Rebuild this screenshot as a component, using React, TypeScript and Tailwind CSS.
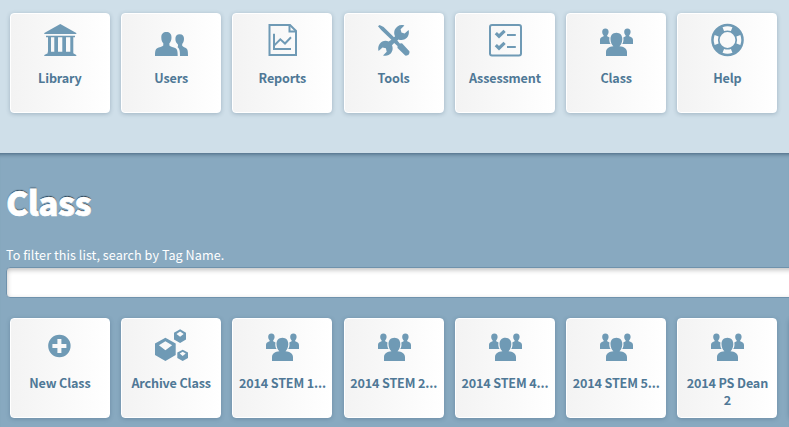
import type { ReactNode } from "react";

function Svg({ children }: { children: ReactNode }) {
  return (
    <svg viewBox="0 0 34 34" className="block h-[34px] w-[34px] shrink-0 fill-current">
      {children}
    </svg>
  );
}

const LibraryIcon = () => (
  <Svg>
    <path d="M17.3 1 33.3 10V11H1.3V10ZM3 12.7H32V14.3H3ZM5 14.3H8V29H5ZM11.3 14.3H15V29H11.3ZM19.3 14.3H23V29H19.3ZM27.3 14.3H30.3V29H27.3ZM4.7 28.7H30.3V30.3L33.3 32V33H1.3V32L4.7 30.3Z" />
  </Svg>
);

const UsersIcon = () => (
  <Svg>
    <path d="M12.4 9C15.6 9 17.6 11 17.5 14.4C17.4 17.2 16.6 19 15.4 20.2V22.4C16.2 23.6 19.6 24 21.6 25.2C23.3 26.3 23.7 28 23.7 33H1C1 28 1.4 26.3 3.1 25.2C5 24 8.5 23.6 9.3 22.4V20.2C8.1 19 7.3 17.2 7.3 14.4C7.2 11 9.2 9 12.4 9Z" />
    <path d="M25.7 11.2C28.6 11.2 30.1 13.1 30 16.1C29.9 18.4 29.2 20 28.2 21V22.8C29 24 31.2 24.4 32.5 25.5C33.8 26.6 34 28.5 34 33H26C26 28.3 25.8 25.7 23.4 23.9C24.3 23.5 24 22.2 23.9 21.4C22.4 20.4 21.4 18.4 21.4 16.1C21.3 13.1 22.8 11.2 25.7 11.2Z" />
  </Svg>
);

const ReportsIcon = () => (
  <Svg>
    <g fill="none" stroke="currentColor" strokeWidth="2">
      <path d="M4.5 2H25L31 8V32H4.5Z" />
      <path d="M24.5 2V8.5H31" />
      <path d="M9 10.7V26H26M9.3 22.4 15.3 16.3 20 20.5 26 14.3" />
    </g>
  </Svg>
);

const ToolsIcon = () => (
  <Svg>
    <path d="M1 3.2 2.6 2 6.6 4 17 14.3 18.1 13.2C16.2 9.5 17.5 5.6 20.5 3.4C22.5 2 24.8 1.8 27.4 2.5L23.6 6.3 24.4 9.6 27.6 10.4 31.6 6.9C32.6 11 31 14.4 27.8 16.2C25.8 17.2 23.6 17.3 21.4 16.5L20.3 17.6 22.8 20.4 25 20.3 32.4 28.2C33 31 31 33 28.2 32.6L20.5 25V23L17.2 19.9 15 22.2C16.7 26.3 15 30.3 11.6 32C9.7 33 8 33 6 32.4L9.7 28.7 8.9 25.3 5.5 24.5 1.6 28C.5 24.1 2.1 20.3 5.3 18.6C7.3 17.6 9.5 17.6 11.6 18.5L14.4 16.8 4.2 7Z" />
  </Svg>
);

const AssessmentIcon = () => (
  <Svg>
    <g fill="none" stroke="currentColor">
      <rect x="2" y="2" width="31" height="30.5" rx="2" strokeWidth="2" />
      <path d="M7.8 10.2 11 13.2 16.6 7.8M7.8 22.2 11 25.2 16.6 19.8" strokeWidth="3.2" />
      <path d="M19 12H27.8M19 24H27.8" strokeWidth="2" />
    </g>
  </Svg>
);

const ClassIcon = () => (
  <Svg>
    <path d="M6.4 5.4C8.5 5.4 9.8 7 9.6 9.1C9.4 10.8 8.9 11.7 8.2 12.3V13.3L10.5 14.5C10 17 10.4 19.4 11.6 21H1V17C1 15 2 14.2 4.6 13.3V12.3C3.9 11.7 3.3 10.8 3.2 9.1C3 7 4.3 5.4 6.4 5.4Z" />
    <path d="M28.4 5.4C30.5 5.4 31.8 7 31.6 9.1C31.4 10.8 30.9 11.7 30.2 12.3V13.3C32.8 14.2 34 15 34 17V21H23.2C24.4 19.4 24.8 17 24.3 14.5L26.6 13.3V12.3C25.9 11.7 25.3 10.8 25.2 9.1C25 7 26.3 5.4 28.4 5.4Z" />
    <path d="M17.4 9.8C21.3 9.8 23.4 12.6 23.3 16.2C23.2 19.4 22 22 20.5 23.2C24.7 23.6 28 25.3 28 29V33H7V29C7 25.3 10.2 23.6 14.4 23.2C12.8 22 11.6 19.4 11.5 16.2C11.4 12.6 13.5 9.8 17.4 9.8Z" />
  </Svg>
);

const HelpIcon = () => (
  <Svg>
    <g fill="none">
      <circle cx="17.5" cy="17" r="12.1" stroke="currentColor" strokeWidth="8.4" />
      <g stroke="#fafafa" strokeWidth="4.2">
        <path d="M13.3 6.1A11.8 11.8 0 0 1 21.7 6.1" />
        <path d="M13.3 27.9A11.8 11.8 0 0 0 21.7 27.9" />
        <path d="M6.6 12.8A11.8 11.8 0 0 0 6.6 21.2" />
        <path d="M28.4 12.8A11.8 11.8 0 0 1 28.4 21.2" />
      </g>
    </g>
  </Svg>
);

const PlusIcon = () => (
  <Svg>
    <path
      fillRule="evenodd"
      d="M16.4 6.8A11.2 11.2 0 1 1 16.4 29.2A11.2 11.2 0 1 1 16.4 6.8ZM14.4 11V16H9.4V20H14.4V25H18.4V20H23.4V16H18.4V11Z"
    />
  </Svg>
);

const ArchiveIcon = () => (
  <Svg>
    <path
      fillRule="evenodd"
      d="M11.4 9.7 21.7 15.4V27L11.4 33 1 27V15.4ZM11.4 13.2 4.9 17.3 11.4 22.2 18.1 17.3ZM26.1 1.3 32 4.8V11.5L26.1 15 20 11.5V4.8ZM26.1 3.6 22.5 6 26.1 8.8 29.7 6ZM28.7 21.7 34 24.6V30.1L28.7 33.1 23.3 30.1V24.6ZM28.7 23.7 25.7 25.6 28.7 28 31.7 25.6Z"
    />
  </Svg>
);

type Item = { label: string; icon: ReactNode };

const menu: Item[] = [
  { label: "Library", icon: <LibraryIcon /> },
  { label: "Users", icon: <UsersIcon /> },
  { label: "Reports", icon: <ReportsIcon /> },
  { label: "Tools", icon: <ToolsIcon /> },
  { label: "Assessment", icon: <AssessmentIcon /> },
  { label: "Class", icon: <ClassIcon /> },
  { label: "Help", icon: <HelpIcon /> },
];

const classes: Item[] = [
  { label: "New Class", icon: <PlusIcon /> },
  { label: "Archive Class", icon: <ArchiveIcon /> },
  { label: "2014 STEM 1...", icon: <ClassIcon /> },
  { label: "2014 STEM 2...", icon: <ClassIcon /> },
  { label: "2014 STEM 4...", icon: <ClassIcon /> },
  { label: "2014 STEM 5...", icon: <ClassIcon /> },
  { label: "2014 PS Dean 2", icon: <ClassIcon /> },
];

function Tile({ label, icon }: Item) {
  return (
    <button className="flex h-[100px] w-[100px] shrink-0 flex-col items-center rounded-[4px] border border-white bg-linear-to-r from-[#f3f3f3] to-white px-1 pt-[9px] text-[#6f9ab5] shadow-[0_1px_4px_rgba(40,70,95,0.28)]">
      {icon}
      <span className="mt-[12px] text-center text-[12.6px] leading-[17px] font-bold tracking-[-0.15px] text-[#4f7896]">
        {label}
      </span>
    </button>
  );
}

export default function App() {
  return (
    <div className="flex h-[427px] w-full flex-col overflow-hidden bg-[#88a9c0] font-['Noto_Sans_CJK_SC','Open_Sans',sans-serif]">
      <nav className="flex h-[153px] shrink-0 gap-[11.25px] bg-[#cfdfe9] pt-[13px] pl-[9.9px]">
        {menu.map((item) => (
          <Tile key={item.label} {...item} />
        ))}
      </nav>
      <main className="flex grow flex-col shadow-[inset_0_5px_4px_-4px_rgba(50,80,105,0.8)]">
        <h1 className="mt-[24px] ml-[6px] h-[50px] text-[33.5px] leading-[50px] font-black tracking-[-0.6px] text-white [-webkit-text-stroke:0.7px_white] [text-shadow:0_-1px_1px_#22384a]">
          Class
        </h1>
        <label className="mt-[19px] ml-[6px] h-[18px] text-[12.6px] leading-[18px] tracking-[0.05px] text-white">
          To filter this list, search by Tag Name.
        </label>
        <div className="mt-[3px] ml-[6px] h-[31px] w-[800px] shrink-0 rounded-[4px] border border-[#6f92ac] bg-white shadow-[inset_0_2px_5px_rgba(0,0,0,0.25)]" />
        <div className="mt-[20px] flex gap-[11.25px] pl-[9.9px]">
          {classes.map((item) => (
            <Tile key={item.label} {...item} />
          ))}
          <div className="h-[100px] w-[100px] shrink-0 rounded-[4px] bg-white shadow-[0_1px_4px_rgba(40,70,95,0.28)]" />
        </div>
      </main>
    </div>
  );
}
